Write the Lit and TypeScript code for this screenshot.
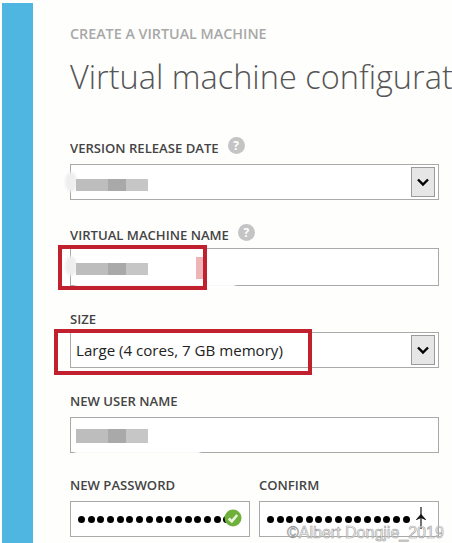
import { LitElement, html, css, svg } from 'lit'
import { customElement } from 'lit/decorators.js'

const helpIcon = html`<span class="help">?</span>`

const chevron = html`
  <span class="arrow">
    <svg width="14" height="9" viewBox="0 0 14 9">
      <path d="M2 1.5 L7 6.5 L12 1.5" fill="none" stroke="#000" stroke-width="2.4" />
    </svg>
  </span>
`

const checkIcon = svg`
  <svg class="check" width="18" height="18" viewBox="0 0 18 18">
    <circle cx="9" cy="9" r="8.5" fill="#6fb03a" />
    <path d="M4.8 9.5 L7.8 12.4 L13.2 6" fill="none" stroke="#e8f4dc" stroke-width="2.6" />
  </svg>
`

const cursorIcon = svg`
  <svg class="cursor" width="12" height="22" viewBox="0 0 12 22">
    <path d="M6 0 V22" stroke="#111" stroke-width="1.2" />
    <path d="M1.5 12.5 L6 7.5 L10.5 12.5 L6 10.5 Z" fill="#111" stroke="#111" stroke-width="1" />
  </svg>
`

@customElement('app-root')
export class AppRoot extends LitElement {
  static styles = css`
    :host {
      display: block;
      width: 452px;
      height: 543px;
      overflow: hidden;
      background: #fefefd;
      font-family: 'Open Sans', 'Liberation Sans', sans-serif;
      color: #333;
    }
    .page {
      display: flex;
      height: 540px;
      padding: 3px 0 0 2px;
    }
    .rail {
      flex: none;
      width: 31px;
      background: #4fb5e1;
    }
    .main {
      flex: none;
      width: 369px;
      margin-left: 37px;
      padding-top: 22px;
    }
    .eyebrow {
      font-size: 14.3px;
      line-height: 18px;
      font-weight: 600;
      color: #a8a8a8;
      white-space: nowrap;
    }
    h1 {
      margin: 11px 0 0;
      font-size: 32.5px;
      line-height: 46px;
      font-weight: 300;
      color: #555;
      white-space: nowrap;
    }
    .field {
      position: relative;
    }
    .label {
      display: flex;
      align-items: center;
      gap: 9px;
      height: 18px;
      margin-bottom: 7px;
      font-size: 13.1px;
      font-weight: 600;
      color: #444;
      white-space: nowrap;
    }
    .tight .label {
      margin-bottom: 4px;
    }
    .help {
      display: flex;
      align-items: center;
      justify-content: center;
      width: 17px;
      height: 17px;
      margin-top: -6px;
      border-radius: 50%;
      background: #c4c4c4;
      color: #fff;
      font-size: 12px;
      font-weight: 700;
    }
    .box {
      position: relative;
      display: flex;
      align-items: center;
      box-sizing: border-box;
      height: 36px;
      padding-left: 5px;
      border: 1px solid #a9a9a9;
      background: #fff;
      font-size: 15.1px;
      color: #222;
    }
    .vm-name .box {
      height: 38px;
    }
    .arrow {
      position: absolute;
      top: 2px;
      right: 3px;
      display: flex;
      align-items: center;
      justify-content: center;
      box-sizing: border-box;
      width: 24px;
      height: 30px;
      border: 1px solid #9a9a9a;
      background: #e6e6e6;
    }
    .version {
      margin-top: 39px;
    }
    .vm-name {
      margin-top: 26px;
    }
    .size {
      margin-top: 24px;
    }
    .user {
      margin-top: 24px;
    }
    .passwords {
      display: grid;
      grid-template-columns: 180px 180px;
      gap: 9px;
      margin-top: 23px;
    }
    .masked {
      position: absolute;
      left: 5px;
      top: 14px;
      width: 72px;
      height: 12px;
      background: linear-gradient(90deg, #bdbdbd 0 45%, #a9a9a9 45% 70%, #c6c6c6 70%);
      filter: blur(0.6px);
    }
    .user .masked {
      top: 11px;
      height: 14px;
    }
    .smudge {
      position: absolute;
      left: -6px;
      top: 7px;
      width: 12px;
      height: 20px;
      border-radius: 50%;
      background: #eeeeee;
      filter: blur(1px);
    }
    .streak {
      position: absolute;
      left: 4px;
      bottom: -2px;
      height: 5px;
      background: #fff;
      filter: blur(1px);
    }
    .dots {
      display: flex;
      gap: 2.7px;
      padding-left: 2px;
    }
    .dots i {
      width: 7px;
      height: 7px;
      border-radius: 50%;
      background: #000;
    }
    .check {
      position: absolute;
      right: 7px;
      top: 7px;
    }
    .cursor {
      position: absolute;
      right: 11px;
      top: 5px;
    }
    .callout {
      position: absolute;
      box-sizing: border-box;
      border: 4px solid #c1202f;
      pointer-events: none;
    }
    .callout.name {
      left: -12px;
      top: 19px;
      width: 149px;
      height: 45px;
    }
    .callout.sz {
      left: -16px;
      top: 19px;
      width: 258px;
      height: 46px;
    }
    .tint {
      position: absolute;
      left: 126px;
      top: 31px;
      width: 11px;
      height: 22px;
      background: #efb4b8;
    }
    .watermark {
      position: absolute;
      left: 28px;
      top: 48px;
      font-family: 'Liberation Sans', sans-serif;
      font-size: 16px;
      line-height: 18px;
      white-space: nowrap;
      color: rgba(255, 255, 255, 0.7);
      -webkit-text-stroke: 0.6px #9a9a9a;
    }
  `

  private dots(count: number) {
    return html`<div class="dots">${Array.from({ length: count }, () => html`<i></i>`)}</div>`
  }

  render() {
    return html`
      <div class="page">
        <div class="rail"></div>
        <div class="main">
          <div class="eyebrow">CREATE A VIRTUAL MACHINE</div>
          <h1>Virtual machine configuration</h1>

          <div class="field version">
            <div class="label">VERSION RELEASE DATE ${helpIcon}</div>
            <div class="box">
              <span class="smudge"></span>
              <span class="masked"></span>
              ${chevron}
            </div>
          </div>

          <div class="field vm-name tight">
            <div class="label">VIRTUAL MACHINE NAME ${helpIcon}</div>
            <div class="box">
              <span class="smudge"></span>
              <span class="masked"></span>
              <span class="streak" style="width: 160px"></span>
            </div>
            <span class="tint"></span>
            <span class="callout name"></span>
          </div>

          <div class="field size tight">
            <div class="label">SIZE</div>
            <div class="box">Large (4 cores, 7 GB memory) ${chevron}</div>
            <span class="callout sz"></span>
          </div>

          <div class="field user">
            <div class="label">NEW USER NAME</div>
            <div class="box">
              <span class="masked"></span>
              <span class="streak" style="width: 125px"></span>
            </div>
          </div>

          <div class="passwords">
            <div class="field">
              <div class="label">NEW PASSWORD</div>
              <div class="box">${this.dots(16)} ${checkIcon}</div>
            </div>
            <div class="field">
              <div class="label">CONFIRM</div>
              <div class="box">${this.dots(15)} ${cursorIcon}</div>
              <span class="watermark">©Albert Dongjie_2019</span>
            </div>
          </div>
        </div>
      </div>
    `
  }
}
